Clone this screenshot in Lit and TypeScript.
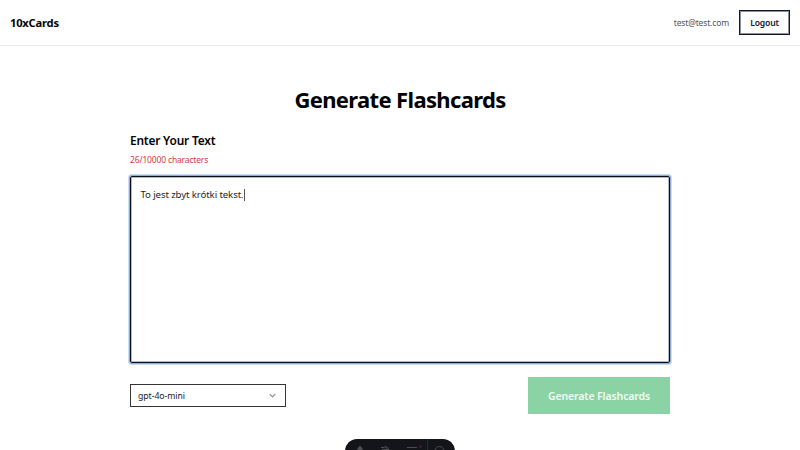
import { LitElement, html, css } from "lit";
import { customElement } from "lit/decorators.js";

@customElement("app-root")
export class AppRoot extends LitElement {
  static styles = css`
    :host {
      display: block;
      position: relative;
      height: 450px;
      overflow: hidden;
      background: #fff;
      color: #020202;
      font-family: "Noto Sans", "Open Sans", sans-serif;
    }
    * { box-sizing: border-box; margin: 0; }
    header {
      display: flex;
      align-items: center;
      justify-content: space-between;
      height: 46px;
      padding: 0 10px;
      border-bottom: 1px solid #e7e8eb;
    }
    .brand { font-size: 11.2px; line-height: 16px; font-weight: 700; letter-spacing: -0.22px; }
    .account { display: flex; align-items: center; gap: 10px; }
    .email { font-size: 8.5px; line-height: 12px; color: #4b5563; letter-spacing: -0.14px; }
    .logout {
      width: 51px;
      height: 25px;
      padding: 0;
      border: 1px solid #111827;
      box-shadow: inset 0 0 0 1px #8c9099;
      background: #fff;
      color: #111827;
      font: 600 8.6px/12px "Noto Sans", sans-serif;
      letter-spacing: -0.16px;
    }
    main { width: 540px; margin: 0 auto; padding-top: 37px; }
    h1 { text-align: center; font-size: 22px; line-height: 32px; font-weight: 700; letter-spacing: -0.65px; }
    h2 { margin-top: 17px; font-size: 11.9px; line-height: 16px; font-weight: 600; letter-spacing: -0.19px; }
    .count { margin-top: 6px; font-size: 8.5px; line-height: 12px; color: #d23c40; letter-spacing: -0.16px; }
    .editor {
      height: 187px;
      margin-top: 10px;
      padding: 11px 9.5px;
      border: 1px solid #0b1020;
      border-radius: 2px;
      box-shadow: inset 0 0 0 1px #b4b7be, 0 0 0 1px #8fabd8, 0 0 0 2px #cbdcf5;
      font-size: 9.7px;
      line-height: 14px;
      letter-spacing: -0.13px;
      color: #262626;
    }
    .caret { display: inline-block; width: 1px; height: 12px; vertical-align: -3px; background: #555; }
    .actions { display: flex; justify-content: space-between; align-items: center; margin-top: 14px; }
    .model {
      display: flex;
      align-items: center;
      justify-content: space-between;
      width: 156px;
      height: 23px;
      padding: 0 8px 0 7px;
      border: 1px solid #343434;
      font-size: 8.7px;
      color: #222;
      letter-spacing: -0.05px;
    }
    .chevron { width: 9px; height: 9px; fill: none; stroke: #8a8a8a; stroke-width: 1.1; }
    .generate {
      width: 142px;
      height: 37px;
      padding: 0;
      border: 0;
      background: #8bd2a4;
      color: #f1fbf4;
      font: 600 10.5px/16px "Noto Sans", sans-serif;
      letter-spacing: -0.12px;
    }
    .dock {
      position: absolute;
      left: 345px;
      top: 439px;
      width: 110px;
      height: 24px;
      border-radius: 12px;
      background: #14151a;
    }
    .dock svg { display: block; width: 110px; height: 24px; fill: none; stroke: #4c4d53; }
  `;

  render() {
    return html`
      <header>
        <div class="brand"><span>10xCards</span></div>
        <div class="account">
          <span class="email">test@test.com</span>
          <button class="logout">Logout</button>
        </div>
      </header>
      <main>
        <h1>Generate Flashcards</h1>
        <h2>Enter Your Text</h2>
        <p class="count">26/10000 characters</p>
        <div class="editor">To jest zbyt krótki tekst.<span class="caret"></span></div>
        <div class="actions">
          <div class="model">
            <span>gpt-4o-mini</span>
            <svg class="chevron" viewBox="0 0 9 9"><path d="M1.8 3.2 4.5 5.9 7.2 3.2" /></svg>
          </div>
          <button class="generate">Generate Flashcards</button>
        </div>
      </main>
      <div class="dock">
        <svg viewBox="0 0 110 24">
          <path d="M13 12v-2.500l1.500-2h1l1.500 2V12z" fill="#4c4d53" />
          <path d="M36 8.500h3l2-1.500v2h3M37 10.500h7v4h-7z" />
          <path d="M62 8.500h10M64 11.500h8" />
          <circle cx="75.500" cy="7.500" r="1" stroke="#5c202c" />
          <path d="M82.500 0v24" stroke="#292a30" />
          <circle cx="94.500" cy="12" r="4.500" />
          <path d="M92 11.500h5" />
        </svg>
      </div>
    `;
  }
}
